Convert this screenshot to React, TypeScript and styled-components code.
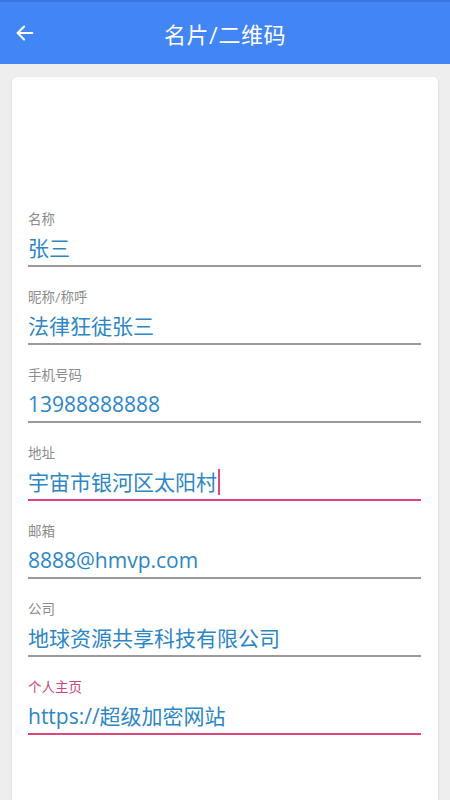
import React from "react";
import styled, { createGlobalStyle } from "styled-components";

const GlobalStyle = createGlobalStyle`
  html, body {
    margin: 0;
    padding: 0;
    background: #eeeeee;
    font-family: "Roboto", "Noto Sans CJK SC", sans-serif;
  }
`;

interface FieldItem {
  label: string;
  value: string;
  focused?: boolean;
  editing?: boolean;
}

const fields: FieldItem[] = [
  { label: "名称", value: "张三" },
  { label: "昵称/称呼", value: "法律狂徒张三" },
  { label: "手机号码", value: "13988888888" },
  { label: "地址", value: "宇宙市银河区太阳村", editing: true },
  { label: "邮箱", value: "8888@hmvp.com" },
  { label: "公司", value: "地球资源共享科技有限公司" },
  { label: "个人主页", value: "https://超级加密网站", focused: true },
];

const Page = styled.div`
  min-height: 800px;
  background: #eeeeee;
  overflow: hidden;
`;

const Header = styled.header`
  height: 64px;
  background: #4285f4;
  border-top: 2px solid #3a78e0;
  box-sizing: border-box;
  display: flex;
  align-items: center;
  justify-content: center;
  position: relative;
  color: #ffffff;
`;

const BackButton = styled.button`
  position: absolute;
  left: 12px;
  top: 50%;
  transform: translateY(-50%);
  width: 26px;
  height: 26px;
  padding: 0;
  border: none;
  background: none;
  display: flex;
  align-items: center;
  justify-content: center;
`;

const Title = styled.h1`
  margin: 0;
  font-size: 22px;
  font-weight: 400;
  letter-spacing: 0.5px;
`;

const Card = styled.main`
  margin: 13px 12px 0;
  background: #ffffff;
  border-radius: 5px;
  box-shadow: 0 1px 3px rgba(0, 0, 0, 0.12);
  padding: 133px 17px 120px 16px;
  display: flex;
  flex-direction: column;
  gap: 21px;
`;

const Field = styled.div`
  display: flex;
  flex-direction: column;
`;

const Label = styled.label<{ $active?: boolean }>`
  font-size: 13.5px;
  line-height: 18px;
  color: ${(p) => (p.$active ? "#c9487c" : "#8c8c8c")};
`;

const Value = styled.div<{ $accent?: boolean }>`
  margin-top: 6px;
  padding-bottom: 3px;
  font-family: "Open Sans", "Noto Sans CJK SC", sans-serif;
  font-size: 21px;
  line-height: 28px;
  color: #2d86c5;
  border-bottom: 2px solid ${(p) => (p.$accent ? "#e0457b" : "#9a9a9a")};
  display: flex;
  align-items: center;
  white-space: nowrap;
`;

const Cursor = styled.span`
  display: inline-block;
  width: 2px;
  height: 26px;
  margin-left: 1px;
  background: #e0457b;
`;

export default function App() {
  return (
    <Page>
      <GlobalStyle />
      <Header>
        <BackButton aria-label="返回">
          <svg width="22" height="22" viewBox="0 0 24 24" fill="none" stroke="#ffffff" strokeWidth="2.2" strokeLinecap="round" strokeLinejoin="round">
            <path d="M20 12H4" />
            <path d="M11 5l-7 7 7 7" />
          </svg>
        </BackButton>
        <Title>名片/二维码</Title>
      </Header>
      <Card>
        {fields.map((f) => (
          <Field key={f.label}>
            <Label $active={f.focused}>{f.label}</Label>
            <Value $accent={f.focused || f.editing}>
              {f.value}
              {f.editing && <Cursor />}
            </Value>
          </Field>
        ))}
      </Card>
    </Page>
  );
}
